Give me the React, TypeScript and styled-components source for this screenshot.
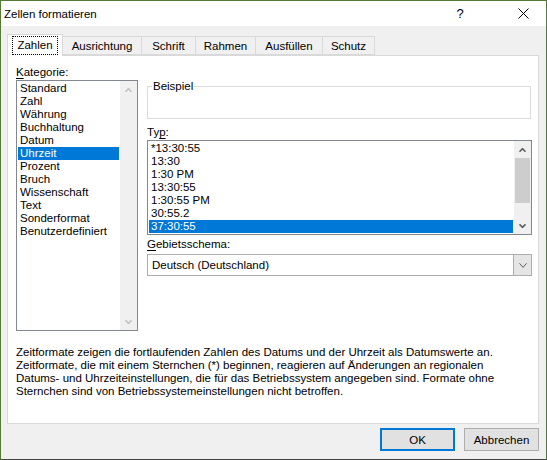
import React from "react"
import styled, { createGlobalStyle } from "styled-components"

const GlobalStyle = createGlobalStyle`
  html, body {
    margin: 0;
    padding: 0;
    background: #fff;
  }
  body {
    font-family: "Liberation Sans", "Segoe UI", Arial, sans-serif;
    font-size: 11.5px;
    color: #000;
  }
`

const kategorien = [
  "Standard",
  "Zahl",
  "Währung",
  "Buchhaltung",
  "Datum",
  "Uhrzeit",
  "Prozent",
  "Bruch",
  "Wissenschaft",
  "Text",
  "Sonderformat",
  "Benutzerdefiniert",
]

const typen = ["*13:30:55", "13:30", "1:30 PM", "13:30:55", "1:30:55 PM", "30:55.2", "37:30:55"]

const tabs = [
  { label: "Zahlen", width: 56 },
  { label: "Ausrichtung", width: 80 },
  { label: "Schrift", width: 55 },
  { label: "Rahmen", width: 61 },
  { label: "Ausfüllen", width: 68 },
  { label: "Schutz", width: 53 },
]

const Window = styled.div`
  width: 547px;
  height: 460px;
  box-sizing: border-box;
  border: 1px solid #557a35;
  border-bottom-color: #454545;
  background: #f0f0f0;
  display: flex;
  flex-direction: column;
`

const TitleBar = styled.div`
  height: 25px;
  flex: none;
  background: #fff;
  display: flex;
  align-items: center;
`

const Title = styled.div`
  flex: 1;
  padding-left: 3px;
`

const CaptionButton = styled.div<{ $w: number; $gap?: number }>`
  width: ${(p) => p.$w}px;
  margin-left: ${(p) => p.$gap || 0}px;
  height: 25px;
  display: flex;
  align-items: center;
  justify-content: center;
  font-size: 13px;
`

const Body = styled.div`
  flex: 1;
  padding: 8px 7px 0 6px;
  display: flex;
  flex-direction: column;
`

const TabRow = styled.div`
  height: 21px;
  display: flex;
  align-items: flex-end;
  position: relative;
  z-index: 1;
`

const Tab = styled.div<{ $w: number; $active?: boolean }>`
  width: ${(p) => p.$w}px;
  height: ${(p) => (p.$active ? 22 : 19)}px;
  margin-bottom: ${(p) => (p.$active ? -1 : 0)}px;
  margin-left: -1px;
  box-sizing: border-box;
  border: 1px solid #d9d9d9;
  border-bottom: ${(p) => (p.$active ? "none" : "1px solid #d9d9d9")};
  background: ${(p) => (p.$active ? "#fff" : "#f0f0f0")};
  position: relative;
  z-index: ${(p) => (p.$active ? 2 : 1)};
  display: flex;
  align-items: center;
  justify-content: center;
  padding-bottom: ${(p) => (p.$active ? 1 : 0)}px;
  &:first-child {
    margin-left: 0;
  }
`

const Focus = styled.span`
  outline: 1px dotted #000;
  outline-offset: 0;
  padding: 2px 4px 2px;
  line-height: 13px;
`

const Panel = styled.div`
  width: 532px;
  height: 369px;
  box-sizing: border-box;
  background: #fff;
  border: 1px solid #d9d9d9;
  padding: 10px 6px 0 8px;
  display: flex;
  flex-direction: column;
`

const Columns = styled.div`
  display: flex;
  gap: 9px;
`

const LeftColumn = styled.div`
  width: 122px;
  display: flex;
  flex-direction: column;
`

const RightColumn = styled.div`
  flex: 1;
  padding-top: 14px;
  display: flex;
  flex-direction: column;
`

const Label = styled.div<{ $top?: number }>`
  line-height: 13px;
  margin-top: ${(p) => p.$top || 0}px;
  margin-bottom: 1px;
`

const Accel = styled.span`
  text-decoration: underline;
  text-underline-offset: 2px;
`

const ListBox = styled.div<{ $h: number }>`
  height: ${(p) => p.$h}px;
  box-sizing: border-box;
  border: 1px solid #828790;
  display: flex;
`

const Items = styled.div`
  flex: 1;
  padding: 1px;
`

const Item = styled.div<{ $selected?: boolean }>`
  height: 13px;
  line-height: 13px;
  padding-left: 2px;
  white-space: nowrap;
  background: ${(p) => (p.$selected ? "#0078d7" : "transparent")};
  color: ${(p) => (p.$selected ? "#fff" : "#000")};
`

const ScrollBar = styled.div`
  width: 17px;
  background: #f0f0f0;
  display: flex;
  flex-direction: column;
`

const ArrowButton = styled.div`
  height: 17px;
  flex: none;
  display: flex;
  align-items: center;
  justify-content: center;
`

const Track = styled.div`
  flex: 1;
  display: flex;
  flex-direction: column;
  padding: 0 1px;
`

const Thumb = styled.div<{ $h: number }>`
  height: ${(p) => p.$h}px;
  background: #cdcdcd;
`

const GroupBox = styled.fieldset`
  margin: 0 1px 0 0;
  padding: 0;
  height: 39px;
  box-sizing: border-box;
  border: 1px solid #dcdcdc;
  min-width: 0;
`

const Legend = styled.legend`
  margin-left: 4px;
  padding: 0 1px;
  line-height: 13px;
`

const Combo = styled.div`
  margin-top: 2px;
  height: 22px;
  box-sizing: border-box;
  border: 1px solid #adadad;
  display: flex;
  align-items: stretch;
`

const ComboText = styled.div`
  flex: 1;
  padding-left: 4px;
  line-height: 20px;
`

const ComboButton = styled.div`
  width: 17px;
  background: #e5e5e5;
  border-left: 1px solid #adadad;
  display: flex;
  align-items: center;
  justify-content: center;
`

const Description = styled.div`
  margin-top: 15px;
  line-height: 13px;
  white-space: nowrap;
`

const ButtonRow = styled.div`
  display: flex;
  justify-content: flex-end;
  gap: 9px;
  padding-top: 4px;
`

const Button = styled.div<{ $default?: boolean }>`
  width: 75px;
  height: 23px;
  box-sizing: border-box;
  background: #e1e1e1;
  border: ${(p) => (p.$default ? "2px solid #0078d7" : "1px solid #adadad")};
  display: flex;
  align-items: center;
  justify-content: center;
`

function Chevron({ up, color, w = 7, h = 4, sw = 1.6 }: { up?: boolean; color: string; w?: number; h?: number; sw?: number }) {
  const pts = up ? `0.5,${h - 0.2} ${w / 2},0.6 ${w - 0.5},${h - 0.2}` : `0.5,0.3 ${w / 2},${h - 0.6} ${w - 0.5},0.3`
  return (
    <svg width={w} height={h} viewBox={`0 0 ${w} ${h}`}>
      <polyline points={pts} fill="none" stroke={color} strokeWidth={sw} />
    </svg>
  )
}

export default function App() {
  return (
    <>
      <GlobalStyle />
      <Window>
        <TitleBar>
          <Title>Zellen formatieren</Title>
          <CaptionButton $w={30}>?</CaptionButton>
          <CaptionButton $w={46} $gap={25}>
            <svg width="11" height="11" viewBox="0 0 11 11">
              <path d="M0.5 0.5 L10.5 10.5 M10.5 0.5 L0.5 10.5" stroke="#000" strokeWidth="1" />
            </svg>
          </CaptionButton>
        </TitleBar>
        <Body>
          <TabRow>
            {tabs.map((t, i) => (
              <Tab key={t.label} $w={t.width} $active={i === 0}>
                {i === 0 ? <Focus>{t.label}</Focus> : t.label}
              </Tab>
            ))}
          </TabRow>
          <Panel>
            <Columns>
              <LeftColumn>
                <Label>
                  <Accel>K</Accel>ategorie:
                </Label>
                <ListBox $h={251}>
                  <Items>
                    {kategorien.map((k) => (
                      <Item key={k} $selected={k === "Uhrzeit"}>
                        {k}
                      </Item>
                    ))}
                  </Items>
                  <ScrollBar>
                    <ArrowButton>
                      <Chevron up color="#c2c2c2" />
                    </ArrowButton>
                    <Track />
                    <ArrowButton>
                      <Chevron color="#c2c2c2" />
                    </ArrowButton>
                  </ScrollBar>
                </ListBox>
              </LeftColumn>
              <RightColumn>
                <GroupBox>
                  <Legend>Beispiel</Legend>
                </GroupBox>
                <Label $top={7}>
                  Ty<Accel>p</Accel>:
                </Label>
                <ListBox $h={95}>
                  <Items>
                    {typen.map((t, i) => (
                      <Item key={t + i} $selected={i === typen.length - 1}>
                        {t}
                      </Item>
                    ))}
                  </Items>
                  <ScrollBar>
                    <ArrowButton>
                      <Chevron up color="#606060" />
                    </ArrowButton>
                    <Track>
                      <Thumb $h={45} />
                    </Track>
                    <ArrowButton>
                      <Chevron color="#606060" />
                    </ArrowButton>
                  </ScrollBar>
                </ListBox>
                <Label $top={3}>
                  <Accel>G</Accel>ebietsschema:
                </Label>
                <Combo>
                  <ComboText>Deutsch (Deutschland)</ComboText>
                  <ComboButton>
                    <Chevron color="#606060" w={8} h={5} sw={1} />
                  </ComboButton>
                </Combo>
              </RightColumn>
            </Columns>
            <Description>
              Zeitformate zeigen die fortlaufenden Zahlen des Datums und der Uhrzeit als Datumswerte an.
              <br />
              Zeitformate, die mit einem Sternchen (*) beginnen, reagieren auf Änderungen an regionalen
              <br />
              Datums- und Uhrzeiteinstellungen, die für das Betriebssystem angegeben sind. Formate ohne
              <br />
              Sternchen sind von Betriebssystemeinstellungen nicht betroffen.
            </Description>
          </Panel>
          <ButtonRow>
            <Button $default>OK</Button>
            <Button>Abbrechen</Button>
          </ButtonRow>
        </Body>
      </Window>
    </>
  )
}
